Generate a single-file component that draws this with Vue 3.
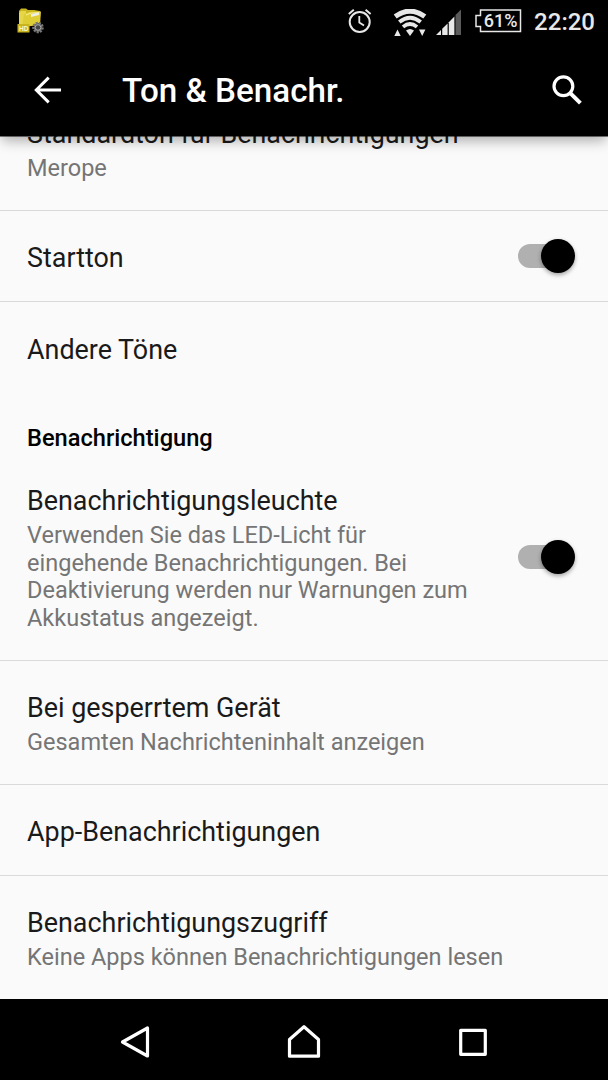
<template>
  <div class="screen">
    <header class="top">
      <div class="status-bar">
        <svg class="folder" width="30" height="28" viewBox="0 0 30 28">
          <path d="M2 4 L4 1.5 H9 L11 3 H17 L23 4 V18 H2 Z" fill="#c9b51e" />
          <path d="M4 4 H9 V18 H2 V6 Z" fill="#e5d64a" />
          <path d="M7 7 L12 5 L24 4.5 L23 18 L5 20 Z" fill="#dfcd36" />
          <path d="M9 8 L14 6 L22 5.5" stroke="#f5ec87" stroke-width="1.2" fill="none" />
          <path d="M14 7 L22 5.5 V8 L14 10 Z" fill="#eeeee4" />
          <rect x="0.5" y="17" width="12" height="8.5" fill="#c8b421" />
          <text x="2" y="24" class="hd">HD</text>
          <circle
            cx="21"
            cy="20.5"
            r="4.4"
            fill="#555"
            stroke="#777"
            stroke-width="2.8"
            stroke-dasharray="2 1"
          />
          <circle cx="21" cy="20.5" r="2.8" fill="#444" stroke="#aaa" />
        </svg>
        <div class="status-icons">
          <svg class="alarm" width="26" height="26" viewBox="0 0 26 26" fill="none" stroke="#e8e8e8">
            <circle cx="12.7" cy="14" r="10" stroke-width="2" />
            <path d="M12.3 8 V14.5 L17 17.5" stroke-width="1.8" />
            <path d="M1.8 6 L6.8 1.7 M18.6 1.7 L23.6 6" stroke-width="2" />
          </svg>
          <svg class="wifi" width="34" height="28" viewBox="0 0 34 28">
            <g fill="none" stroke="#e8e8e8">
              <path d="M2.2 7.6 Q17 -3.4 31.8 7.6" stroke-width="5" />
              <path d="M6.3 13 Q17 4.6 27.7 13" stroke-width="4" />
              <path d="M10 17.9 Q17 12.2 24 17.9" stroke-width="3.8" />
            </g>
            <path d="M13 21.5 Q17 18.5 21 21.5 L17 27 Z" fill="#e8e8e8" />
            <path d="M1.3 27 L4.5 20.5 L7.7 27 Z M26 20.5 H32.4 L29.2 27 Z" fill="#e8e8e8" />
          </svg>
          <svg class="signal" width="26" height="26" viewBox="0 0 26 26">
            <path d="M0 26 L5 21 V26 Z M6.2 26 V19.8 L11.6 14.4 V26 Z" fill="#e8e8e8" />
            <path d="M12.8 26 V13.2 L18.4 7.6 V26 Z" fill="#e8e8e8" />
            <path d="M19.5 26 V6 L25 0.5 V26 Z" fill="#5a5a5a" />
          </svg>
          <div class="battery">
            <svg width="47" height="24" viewBox="0 0 47 24" fill="none" stroke="#e8e8e8">
              <path d="M5.5 1 H45.5 V22.5 H5.5 V17.5 H1 V6.5 H5.5 Z" stroke-width="1.5" />
            </svg>
            <span>61%</span>
          </div>
          <span class="clock">22:20</span>
        </div>
      </div>
      <div class="toolbar">
        <svg class="back" width="28" height="28" viewBox="0 0 28 28" fill="none" stroke="#fff" stroke-width="3">
          <path d="M27 14 H2.5 M14.7 1.6 L2.3 14 L14.7 26.4" />
        </svg>
        <h1>Ton &amp; Benachr.</h1>
        <svg class="search" width="32" height="32" viewBox="0 0 32 32" fill="none" stroke="#fff">
          <circle cx="12.4" cy="12.2" r="9.4" stroke-width="3.2" />
          <path d="M19 18.8 L29.4 29.2" stroke-width="4" />
        </svg>
      </div>
    </header>

    <main class="list">
      <div class="scroll">
        <section v-for="(group, i) in groups" :key="i">
          <h2 v-if="group.header">{{ group.header }}</h2>
          <div v-for="item in group.items" :key="item.title" class="row">
            <div class="label">
              <div class="title">{{ item.title }}</div>
              <div v-if="item.summary" class="summary">{{ item.summary }}</div>
            </div>
            <button
              v-if="'on' in item"
              class="switch"
              :class="{ on: item.on }"
              @click="item.on = !item.on"
            >
              <span class="thumb"></span>
            </button>
          </div>
        </section>
      </div>
    </main>

    <nav class="nav-bar">
      <svg width="36" height="36" viewBox="0 0 36 36">
        <path d="M30.5 4 V32 L5.5 18 Z" />
      </svg>
      <svg width="36" height="36" viewBox="0 0 36 36">
        <path d="M18 2.7 L32.5 15.5 V32.2 H3.5 V15.5 Z" />
      </svg>
      <svg width="36" height="36" viewBox="0 0 36 36">
        <rect x="5.7" y="6.3" width="24.6" height="24" />
      </svg>
    </nav>
  </div>
</template>

<script setup>
import { ref } from 'vue'

const groups = ref([
  {
    items: [
      { title: 'Standardton für Benachrichtigungen', summary: 'Merope' },
      { title: 'Startton', on: true },
      { title: 'Andere Töne' },
    ],
  },
  {
    header: 'Benachrichtigung',
    items: [
      {
        title: 'Benachrichtigungsleuchte',
        summary:
          'Verwenden Sie das LED-Licht für eingehende Benachrichtigungen. Bei Deaktivierung werden nur Warnungen zum Akkustatus angezeigt.',
        on: true,
      },
      { title: 'Bei gesperrtem Gerät', summary: 'Gesamten Nachrichteninhalt anzeigen' },
      { title: 'App-Benachrichtigungen' },
      { title: 'Benachrichtigungszugriff', summary: 'Keine Apps können Benachrichtigungen lesen' },
    ],
  },
])
</script>

<style>
body {
  margin: 0;
  background: #000;
}
</style>

<style scoped>
.screen {
  display: flex;
  flex-direction: column;
  width: 608px;
  height: 1080px;
  overflow: hidden;
  background: #fafafa;
  font-family: Roboto, 'Noto Sans', sans-serif;
}

.top {
  position: relative;
  z-index: 1;
  flex: none;
  height: 136px;
  background: #000;
  box-shadow: 0 7px 12px -2px rgba(0, 0, 0, 0.3), 0 1px 0 rgba(0, 0, 0, 0.5);
}

.status-bar {
  display: flex;
  justify-content: space-between;
  height: 44px;
  padding: 0 13px 0 17px;
  color: #e8e8e8;
}

.folder {
  margin-top: 7px;
}

.hd {
  font: bold 6.5px 'Liberation Sans', sans-serif;
  fill: #fff8c0;
}

.status-icons {
  display: flex;
  align-items: flex-start;
}

.alarm {
  margin: 8px 20px 0 0;
}

.wifi {
  margin: 9px 9px 0 0;
}

.signal {
  margin: 9px 13px 0 0;
}

.battery {
  position: relative;
  width: 47px;
  height: 24px;
  margin: 9px 12px 0 0;
}

.battery span {
  position: absolute;
  inset: 0 0 0 4px;
  font-size: 18px;
  font-weight: 500;
  line-height: 24px;
  text-align: center;
}

.clock {
  font-size: 24px;
  font-weight: 500;
  line-height: 45px;
}

.toolbar {
  display: flex;
  align-items: center;
  height: 91px;
  padding: 0 25px 0 33.5px;
}

.toolbar h1 {
  flex: 1;
  margin: 3px 0 0 60.5px;
  color: #fff;
  font-size: 33.2px;
  font-weight: 500;
  line-height: 40px;
  white-space: nowrap;
}

.list {
  flex: 1;
  min-height: 0;
  overflow: hidden;
}

.scroll {
  margin-top: -48.7px;
}

.row {
  display: flex;
  align-items: center;
  justify-content: space-between;
  box-sizing: border-box;
  min-height: 91.4px;
  padding: 31px 33px 27.2px 27px;
  border-bottom: 1px solid #dadada;
}

.row:last-child {
  border-bottom-color: transparent;
}

/* single-line rows are centred by their minimum height */
.row:not(:has(.summary)) {
  padding-top: 4px;
  padding-bottom: 0;
}

.label:has(+ .switch) {
  max-width: 450px;
}

.title {
  color: #1a1a1a;
  font-size: 26.9px;
  line-height: 32px;
}

.summary {
  margin-top: 5px;
  color: #757575;
  font-size: 23.53px;
  line-height: 27.6px;
}

h2 {
  margin: 0;
  padding: 30.4px 27px 0;
  height: 30px;
  color: #000;
  font-size: 23.64px;
  font-weight: 500;
  line-height: 28px;
}

.switch {
  position: relative;
  flex: none;
  width: 57px;
  height: 24px;
  margin-bottom: 3.8px;
  padding: 0;
  border: 0;
  background: none;
}

.switch::before {
  content: '';
  display: block;
  width: 50px;
  height: 24px;
  border-radius: 12px;
  background: #b0b0b0;
}

.thumb {
  position: absolute;
  top: -5px;
  left: 0;
  width: 34px;
  height: 34px;
  border-radius: 50%;
  background: #f1f1f1;
  box-shadow: 0 2px 4px rgba(0, 0, 0, 0.35);
}

.switch.on .thumb {
  left: 23px;
  background: #000;
}

.nav-bar {
  display: flex;
  flex: none;
  align-items: center;
  justify-content: center;
  gap: 133px;
  height: 81px;
  padding-top: 5px;
  box-sizing: border-box;
  background: #000;
}

.nav-bar svg {
  fill: none;
  stroke: #fff;
  stroke-width: 3.2;
  stroke-linejoin: round;
}
</style>
